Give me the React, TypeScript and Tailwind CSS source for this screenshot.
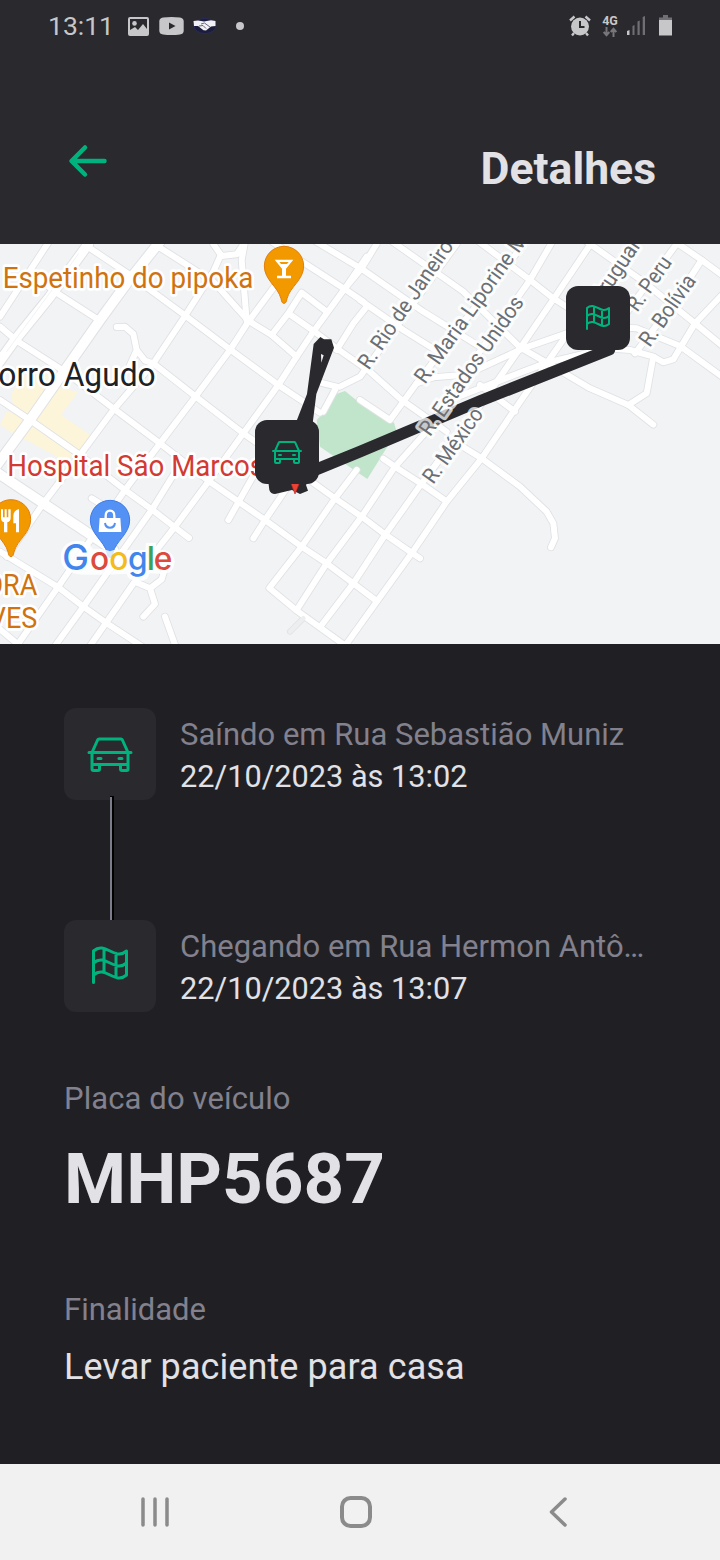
import { PiArrowLeftBold } from "react-icons/pi";

const MINOR_ROADS = [
  // north-east to south-west streets
  "M150 0L0 230",
  "M660 50L640 95L555 228L460 370L340 510L240 645L130 790L20 950",
  "M860 90L745 245L690 330L585 472L480 610L375 750L175 1040L45 1225",
  "M545 665L455 810L250 1100L160 1225",
  "M1100 50L1035 145L940 275L890 350L835 435L730 580L625 725L525 860L470 930L320 1146L265 1225",
  "M770 690L685 840",
  "M870 730L795 840L760 895",
  "M1270 585L1185 680L1085 830L980 970L890 1110",
  "M1070 690L1005 775L905 920L808 1044L890 1112L1040 1220",
  "M1660 0L1590 120L1380 420L1270 585",
  "M1780 0L1660 178L1560 325L1445 490L1265 730L1155 885L1060 1030L965 1155",
  "M1900 0L1640 370L1540 515L1445 655L1340 785L1235 940L1130 1085L1030 1225",
  "M1130 12L1085 85L1035 145",
  "M1370 12L1080 410L1020 440",
  "M1580 0L1250 430L1170 540L1080 480",
  "M2030 12L1950 120L1850 260",
  "M2105 60L2020 190L1905 340",
  "M2180 150L2085 250L2020 358L1990 367L1960 350L1890 330L1820 325L1640 368L1530 410L1350 480",
  "M1960 350L1940 460L1885 495",
  "M1100 200L1060 250L1010 330",
  // north-west to south-east streets
  "M0 260L50 302L195 395L340 505L480 610L625 722L795 840L905 920L980 970L1060 1030L1130 1083",
  "M0 480L90 540L240 645L375 750L455 808L525 862L567 894",
  "M0 935L175 1042L250 1100L318 1148L430 1222",
  "M0 1168L65 1222",
  "M120 120L165 155L300 242",
  "M270 25L380 98L555 226L690 328L835 435L960 518",
  "M475 20L640 125L745 242L815 285L890 350",
  "M460 370L590 472L730 580L935 725L1005 775L1085 830L1155 883L1235 938L1260 955",
  "M780 -20L860 35L1035 148L1090 185",
  "M940 0L1090 90L1270 215L1440 320",
  "M905 158L980 215M905 158L865 220L815 285M865 220L940 272L1010 325L1110 395L1205 480L1340 575",
  "M1080 180L1210 270L1330 345",
  "M1170 0L1390 155L1560 322L1640 368L1770 445L1885 495L1960 554",
  "M1430 0L1590 120L1660 175L1730 220",
  "M1760 5L1930 125L2085 250L2170 320",
  "M2025 5L2105 60L2170 108",
  "M1440 435L1545 515",
  "M1150 656L1185 680L1265 732L1338 783",
  "M1375 612L1445 655L1560 740L1640 815L1660 850L1665 895L1653 922",
  // lanes and loops
  "M640 12L665 48L710 43L735 5L725 60L740 242",
  "M350 261L375 260L400 282L410 330L435 362L460 370M410 330L390 375",
  "M970 515L1010 440L950 425",
  "M275 775L340 815",
  "M415 1030L450 1045L485 1018L495 985M450 1045L465 1092L430 1130",
  "M495 1130L527 1220",
  "M1250 430L1300 412L1385 405L1440 385L1570 325L1700 280L1840 262L1910 265L2040 318L2180 420",
];

const MAIN_ROADS = ["M265 12L150 170L45 300L-20 390", "M490 -8L380 130L300 240L90 540L-20 690", "M-20 690L130 790L340 930"];

type Label = { text: string; x: number; y: number; angle: number; length: number };

const STREETS: Label[] = [
  { text: "R. Rio de Janeiro", x: 1106, y: 392, angle: -55.5, length: 454 },
  { text: "R. Maria Liporine M", x: 1275, y: 435, angle: -54.5, length: 536 },
  { text: "R. Estados Unidos", x: 1290, y: 592, angle: -55, length: 494 },
  { text: "R. México", x: 1300, y: 735, angle: -54.5, length: 262 },
  { text: "Uruguai", x: 1803, y: 195, angle: -56, length: 212 },
  { text: "R. Peru", x: 1912, y: 218, angle: -55, length: 184 },
  { text: "R. Bolívia", x: 1949, y: 324, angle: -55, length: 246 },
];

const HALO = { paintOrder: "stroke" as const };

function CarIcon({ className }: { className: string }) {
  return (
    <svg viewBox="0 0 256 256" className={className} fill="none" stroke="#00b37e" strokeWidth="16" strokeLinecap="round" strokeLinejoin="round">
      <path d="M16 120H240M32 120L62.500 52A8 8 0 0 1 69.500 48H186.500A8 8 0 0 1 193.500 52L224 120V208A8 8 0 0 1 216 216H192A8 8 0 0 1 184 208V184M32 120V208A8 8 0 0 0 40 216H64A8 8 0 0 0 72 208V184M32 184H224M64 152H80M176 152H192" />
    </svg>
  );
}

function FlagIcon({ className }: { className: string }) {
  return (
    <svg viewBox="0 0 256 256" className={className} fill="none" stroke="#00b37e" strokeWidth="16" strokeLinecap="round" strokeLinejoin="round">
      <path d="M40 216V48C104-7.400 152 103.400 216 48V176C152 231.400 104 120.600 40 176M40 112C104 56.600 152 167.400 216 112M96 36V163M160 60V188" />
    </svg>
  );
}

function Pin({ x, y, fill, edge }: { x: number; y: number; fill: string; edge: string }) {
  return (
    <path
      transform={`translate(${x} ${y})`}
      d="M0 112C-5 112-7 108-9 98C-18 62-59 42-59 0A59 59 0 0 1 59 0C59 42 18 62 9 98C7 108 5 112 0 112Z"
      fill={fill}
      stroke={edge}
      strokeWidth="3"
    />
  );
}

function RouteMap() {
  return (
    <div className="relative h-[400px] w-full overflow-hidden bg-[#f1f3f5]">
      <svg viewBox="0 12 2160 1200" className="block h-full w-full" fontFamily="Roboto, sans-serif">
        <path d="M50 430L110 375L160 400L150 450L75 535L55 590L0 555L20 515L42 520L35 465ZM155 440L235 455L183 525L270 585L235 640L190 660L60 590L90 540Z" fill="#fdf5da" />
        <path d="M1000 465L1035 453L1080 490L1182 548L1190 575L1102 717L960 620L950 540L970 520Z" fill="#c1e5cb" />
        <g fill="none" strokeLinejoin="round" strokeLinecap="round">
          <g stroke="#dfe1e4">
            {MINOR_ROADS.map((d) => <path key={d} d={d} strokeWidth="23" />)}
            {MAIN_ROADS.map((d) => <path key={d} d={d} strokeWidth="35" />)}
            <path d="M870 1175L910 1135" strokeWidth="18" />
          </g>
          <g stroke="#ffffff">
            {MINOR_ROADS.map((d) => <path key={d} d={d} strokeWidth="18" />)}
            {MAIN_ROADS.map((d) => <path key={d} d={d} strokeWidth="29" />)}
          </g>
          <path d="M870 1175L910 1135" stroke="#eceef0" strokeWidth="14" />
          <path d="M235 42L20 335" stroke="#e9ebed" strokeWidth="2" />
        </g>

        <path d="M805 725H925L918 735L924 752L900 762L876 750L825 762Q812 762 808 750Z" fill="#29292e" />
        <path d="M885 762L873 730H898Z" fill="#ea4335" stroke="#c5221f" strokeWidth="2" />
        <path
          d="M885 555L921 462L941 312L961 291L972 298L994 298L1002 323L949 462L938 550ZM963 342L964 368L971 346Z"
          fill="#29292e"
          fillRule="evenodd"
        />
        <path d="M930 696L1080 635L1440 483L1828 329" fill="none" stroke="#29292e" strokeWidth="35" strokeLinecap="round" strokeLinejoin="round" />

        <g fill="#6b6f73" stroke="#ffffff" strokeWidth="19" strokeLinejoin="round" fontSize="65">
          {STREETS.map((s) => (
            <text
              key={s.text}
              transform={`translate(${s.x} ${s.y}) rotate(${s.angle})`}
              textLength={s.length}
              lengthAdjust="spacingAndGlyphs"
              strokeOpacity="0.75"
              style={HALO}
            >
              {s.text}
            </text>
          ))}
        </g>

        <g stroke="#ffffff" strokeWidth="16" strokeLinejoin="round">
          <text x="8" y="143" fontSize="90" fill="#d0730f" textLength="752" lengthAdjust="spacingAndGlyphs" style={HALO}>Espetinho do pipoka</text>
          <text x="-5" y="438" fontSize="99" fill="#202124" textLength="472" lengthAdjust="spacingAndGlyphs" style={HALO}>orro Agudo</text>
          <text x="22" y="707" fontSize="90" fill="#d23a33" textLength="770" lengthAdjust="spacingAndGlyphs" style={HALO}>Hospital São Marcos</text>
          <text x="112" y="1065" textAnchor="end" fontSize="90" fill="#d0730f" transform="translate(11 0) scale(.9 1)" style={HALO}>ORA</text>
          <text x="112" y="1165" textAnchor="end" fontSize="90" fill="#d0730f" transform="translate(11 0) scale(.9 1)" style={HALO}>VES</text>
        </g>

        <Pin x={852} y={78} fill="#f29900" edge="#e37f0e" />
        <path d="M824 59H880L858 86V107H873V115H831V107H846V86ZM838 66L843 72H861L866 66Z" fill="#ffffff" fillRule="evenodd" />
        <Pin x={33} y={838} fill="#f29900" edge="#e37f0e" />
        <path d="M3 808H9V832H14V808H20V832H25V808H32V834Q32 844 22 847V877H12V847Q3 844 3 834ZM57 807V877H48V850H40V828Q40 812 57 807Z" fill="#ffffff" />
        <Pin x={330} y={840} fill="#5491f5" edge="#3f7de8" />
        <path d="M299 834H361L364 876H296Z" fill="#ffffff" />
        <path d="M317 838V828Q317 812 330 812T343 828V838" fill="none" stroke="#ffffff" strokeWidth="7" />
        <path d="M315 849Q317 863 330 863T345 849" fill="none" stroke="#5491f5" strokeWidth="6" />

        <path
          d="M232 902Q270 902 278 928Q310 922 330 934Q350 924 385 930L436 930L438 908H468V930Q520 925 524 966Q522 1000 490 1002L448 1000Q445 1024 414 1024Q384 1022 380 1002Q240 1008 222 1000Q182 990 182 952Q184 905 232 902Z"
          fill="#ffffff"
          fillOpacity=".8"
        />
        <g fontFamily="Inter, sans-serif" fontWeight="500" fontSize="95">
          <text y="991">
            <tspan x="187" fill="#4285ec" fontSize="107">G</tspan>
            <tspan x="270" fill="#dc4a3e">o</tspan>
            <tspan x="328" fill="#f3bb1c">o</tspan>
            <tspan x="384" fill="#4285ec">g</tspan>
            <tspan x="440" fill="#3fa156" fontSize="98">l</tspan>
            <tspan x="461" fill="#dc4a3e">e</tspan>
          </text>
        </g>
      </svg>
      <div className="absolute left-[255px] top-[176px] flex size-16 items-center justify-center rounded-[12px] bg-[#29292e]">
        <CarIcon className="size-8" />
      </div>
      <div className="absolute left-[566px] top-[42px] flex size-16 items-center justify-center rounded-[12px] bg-[#29292e]">
        <FlagIcon className="size-8" />
      </div>
    </div>
  );
}

function StatusBar() {
  return (
    <div className="flex h-[52px] items-center justify-between pl-[48px] pr-[48px] text-[#c7c7c9]">
      <div className="flex items-center">
        <span className="w-[65px] whitespace-nowrap text-[26.5px] leading-[52px]">13:11</span>
        <svg viewBox="0 0 21 19" className="ml-[15px] h-[19px] w-[21px]">
          <path
            d="M2 0H19Q21 0 21 2V17Q21 19 19 19H2Q0 19 0 17V2Q0 0 2 0ZM2 2V13L7 10L10 13L15 7L19 12V2Z"
            fill="currentColor"
            fillRule="evenodd"
          />
          <circle cx="6.5" cy="6.4" r="2.3" fill="currentColor" />
        </svg>
        <svg viewBox="0 0 25 18" className="ml-[10px] h-[18px] w-[25px]">
          <path d="M4 .5Q12.500-.5 21 .5Q24.500 1 24.700 4V14Q24.500 17 21 17.500Q12.500 18.500 4 17.500Q.5 17 .3 14V4Q.5 1 4 .5ZM10 5.500V12.500L16.500 9Z" fill="currentColor" fillRule="evenodd" />
        </svg>
        <svg viewBox="0 0 24 18" className="ml-[9px] h-[18px] w-[24px]">
          <ellipse cx="12" cy="9" rx="11" ry="7.500" fill="#1c1d3a" stroke="#292a5c" />
          <path d="M.5 4L5 3.500L11 4.500L18 3.200L22.500 4V9L18 9.500L13 13.500L10.500 13.200L5 9H1Z" fill="#f1f1f6" />
          <path d="M8 7L11.500 6L17 10M6 9L10 8.500L13 11.500" stroke="#45465c" strokeWidth=".8" fill="none" />
        </svg>
        <span className="ml-[19px] size-2 rounded-full bg-[#c7c7c9]" />
      </div>
      <div className="flex items-center pb-px">
        <svg viewBox="0 0 22 22" className="h-[22px] w-[22px]">
          <path d="M1 5.500L5.500 1.500M21 5.500L16.500 1.500M5 18L3 20.500M17 18L19 20.500" stroke="currentColor" strokeWidth="2.400" />
          <circle cx="11" cy="11.500" r="9" fill="currentColor" />
          <path d="M11 6V12H15.500" fill="none" stroke="#29292e" strokeWidth="2" />
        </svg>
        <div className="ml-[11px] flex w-[16px] flex-col items-center">
          <span className="text-[12.500px] font-bold leading-[12px]">4G</span>
          <svg viewBox="0 0 14 10" className="h-[10px] w-[14px]" fill="none" stroke="#77777a" strokeWidth="2">
            <path d="M3.500 0V8M.7 5L3.500 8.200L6.300 5M10.500 10V1.500M7.700 5L10.500 1.800L13.300 5" />
          </svg>
        </div>
        <svg viewBox="0 0 18 19" className="ml-[9px] h-[19px] w-[18px]">
          <path d="M0 15L2.500 14V19H0Z" fill="currentColor" />
          <path d="M5.500 10L7.500 9V19H5.500ZM10.500 5.500L12.700 4.500V19H10.500ZM15.700 1L18 0V19H15.700Z" fill="#707074" />
        </svg>
        <svg viewBox="0 0 13 21" className="ml-[14px] h-[21px] w-[13px]">
          <path d="M4 0H9V2.500H13V5H0V2.500H4Z" fill="#707074" />
          <path d="M0 5H13V20.500H0Z" fill="currentColor" />
        </svg>
      </div>
    </div>
  );
}

function Stop({ kind, label, date }: { kind: "car" | "flag"; label: string; date: string }) {
  return (
    <div className="flex h-[92px]">
      <div className="flex size-[92px] shrink-0 items-center justify-center rounded-[12px] bg-[#29292e]">
        {kind === "car" ? <CarIcon className="size-12" /> : <FlagIcon className="size-12" />}
      </div>
      <div className="ml-6 flex min-w-0 flex-1 flex-col pt-[6px] leading-[42px]">
        <p className="truncate text-[31px] text-[#82818d]">{label}</p>
        <p className="whitespace-nowrap text-[30.7px] text-[#e1e1e6]">{date}</p>
      </div>
    </div>
  );
}

export default function App() {
  return (
    <div className="flex h-[1560px] w-[720px] flex-col overflow-hidden bg-[#202024] font-[Roboto,sans-serif]">
      <header className="h-[244px] shrink-0 bg-[#29292e]">
        <StatusBar />
        <div className="flex items-start justify-between px-16 pt-[85px]">
          <PiArrowLeftBold className="size-12 text-[#00b37e]" />
          <h1 className="mt-[6px] text-[44.5px] font-bold leading-[52px] text-[#e1e1e6]">Detalhes</h1>
        </div>
      </header>
      <RouteMap />
      <main className="flex-1 px-16 pt-16">
        <Stop kind="car" label="Saíndo em Rua Sebastião Muniz" date="22/10/2023 às 13:02" />
        <div className="relative -mt-1 ml-[46px] h-[124px] w-1 bg-black pt-px">
          <div className="h-[123px] w-[2px] bg-[#7c7c8a]" />
        </div>
        <Stop kind="flag" label="Chegando em Rua Hermon Antônio" date="22/10/2023 às 13:07" />
        <p className="mt-[67px] text-[31px] leading-[40px] tracking-[0.1px] text-[#82818d]">Placa do veículo</p>
        <p className="mt-[19px] text-[71px] font-bold leading-[82px] text-[#e1e1e6]">MHP5687</p>
        <p className="mt-[70px] text-[31px] leading-[40px] text-[#82818d]">Finalidade</p>
        <p className="mt-[15px] text-[36px] leading-[44px] tracking-[0.08px] text-[#e1e1e6]">Levar paciente para casa</p>
      </main>
      <nav className="flex h-24 shrink-0 items-center bg-[#f1f1f1]">
        <svg viewBox="0 0 28 32" className="ml-[141px] h-8 w-7" stroke="#8b8b8b" strokeWidth="3.500" strokeLinecap="round">
          <path d="M2 3V29M14 3V29M26 3V29" />
        </svg>
        <svg viewBox="0 0 32 32" className="ml-[171px] size-8" fill="none" stroke="#8b8b8b" strokeWidth="4">
          <rect x="2" y="2" width="28" height="28" rx="8.500" />
        </svg>
        <svg viewBox="0 0 18 32" className="ml-[177px] h-8 w-[18px]" fill="none" stroke="#8b8b8b" strokeWidth="3.500" strokeLinecap="round" strokeLinejoin="round">
          <path d="M16 3L2.500 16L16 29" />
        </svg>
      </nav>
    </div>
  );
}
